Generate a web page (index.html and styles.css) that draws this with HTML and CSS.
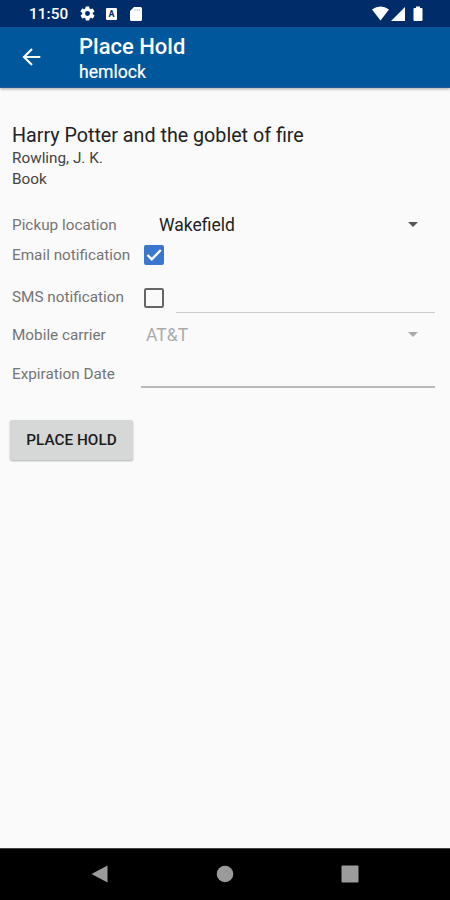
FILE: index.html
```html
<!DOCTYPE html>
<html lang="en">
<head>
<meta charset="utf-8">
<title>Place Hold</title>
<link rel="stylesheet" href="styles.css">
</head>
<body>
<div class="screen">
  <div class="status">
    <span class="clock">11:50</span>
    <svg class="gear" width="17" height="17" viewBox="0 0 24 24"><path fill="#fff" fill-rule="evenodd" d="M19.4 13c.1-.3.1-.6.1-1s0-.7-.1-1l2.1-1.600c.2-.2.3-.5.1-.7l-2-3.400c-.1-.2-.4-.3-.6-.2l-2.500 1c-.5-.4-1.100-.7-1.700-1l-.4-2.600c0-.3-.2-.5-.5-.5h-4c-.2 0-.4.2-.5.4l-.4 2.700c-.6.2-1.100.6-1.700 1l-2.500-1c-.2-.1-.5 0-.6.2l-2 3.400c-.1.2 0 .5.1.7L4.600 11c0 .3-.1.700-.1 1s0 .7.1 1l-2.100 1.600c-.2.2-.3.5-.1.7l2 3.400c.1.200.4.300.6.200l2.500-1c.5.400 1.100.700 1.700 1l.4 2.700c0 .2.200.4.500.4h4c.2 0 .4-.2.500-.4l.4-2.700c.6-.2 1.100-.6 1.700-1l2.500 1c.2.100.5 0 .6-.2l2-3.400c.1-.2 0-.5-.1-.7zM12 15.500a3.500 3.500 0 1 1 0-7 3.500 3.500 0 0 1 0 7z"/></svg>
    <span class="badge">A</span>
    <svg class="sd" width="12" height="14" viewBox="0 0 12 14"><path fill="#fff" d="M4 0h6.500Q12 0 12 1.500v11q0 1.500-1.500 1.500h-9Q0 14 0 12.500V4z"/><path stroke="#a9b7d2" stroke-width=".8" d="M5 2v2M7.200 2v2M9.400 2v2"/></svg>
    <svg class="signals" width="52" height="16" viewBox="0 0 52 16"><path fill="#fff" d="M0 3.500Q8.500-2.500 17 3.500L8.500 14.500zM33 1v14H19zM42.500 2H44V.5h4V2h1.500Q50.500 2 50.500 3v11q0 1-1 1h-7q-1 0-1-1V3q0-1 1-1z"/></svg>
  </div>
  <header class="appbar">
    <svg class="back" width="20" height="20" viewBox="0 0 20 20"><path fill="none" stroke="#fff" stroke-width="2.100" d="M19.300 10H2.800M11 2l-8 8 8 8"/></svg>
    <div>
      <div class="title">Place Hold</div>
      <div class="subtitle">hemlock</div>
    </div>
  </header>
  <main class="content">
    <div class="book">Harry Potter and the goblet of fire</div>
    <div class="meta author">Rowling, J. K.</div>
    <div class="meta format">Book</div>
    <div class="row pickup">
      <span class="label">Pickup location</span>
      <span class="value">Wakefield</span>
      <svg class="caret" width="10" height="5" viewBox="0 0 10 5"><path fill="#555" d="M0 0h10L5 5z"/></svg>
    </div>
    <div class="row email">
      <span class="label">Email notification</span>
      <svg class="box" width="20" height="20" viewBox="0 0 20 20"><rect width="20" height="20" rx="2" fill="#3b78cd"/><path fill="none" stroke="#fff" stroke-width="2.400" d="m3.500 10 4.300 4.300L16.800 5"/></svg>
    </div>
    <div class="row sms">
      <span class="label">SMS notification</span>
      <svg class="box" width="20" height="20" viewBox="0 0 20 20"><rect x="1" y="1" width="18" height="18" rx="1.300" fill="none" stroke="#666" stroke-width="2"/></svg>
      <span class="field phone"></span>
    </div>
    <div class="row carrier">
      <span class="label">Mobile carrier</span>
      <span class="value">AT&amp;T</span>
      <svg class="caret" width="10" height="5" viewBox="0 0 10 5"><path fill="#aaa" d="M0 0h10L5 5z"/></svg>
    </div>
    <div class="row expiry">
      <span class="label">Expiration Date</span>
      <span class="field date"></span>
    </div>
    <button class="submit"><span>PLACE HOLD</span></button>
  </main>
  <nav class="navbar">
    <svg width="18" height="18" viewBox="0 0 18 18"><path fill="#9b9b9b" d="M16.500.5v17L.5 9z"/></svg>
    <svg width="18" height="18" viewBox="0 0 18 18"><circle cx="9" cy="9" r="8.300" fill="#9b9b9b"/></svg>
    <svg width="18" height="18" viewBox="0 0 18 18"><rect x=".5" y=".5" width="17" height="17" rx="1" fill="#9b9b9b"/></svg>
  </nav>
</div>
</body>
</html>
```
FILE: styles.css
```css
* { box-sizing: border-box; }
body { margin: 0; font-family: Roboto, sans-serif; background: #fafafa; }
svg { display: block; flex: none; }
.screen { width: 450px; height: 900px; display: flex; flex-direction: column; }
.status { height: 27px; background: #002d6a; display: flex; align-items: center; padding: 0 26px 0 29px; color: #fff; }
.clock { width: 50px; padding-top: 1px; font-size: 15.300px; font-weight: 500; letter-spacing: .1px; white-space: nowrap; }
.gear { margin-left: 0; }
.badge { width: 11px; height: 12px; margin-left: 10px; border-radius: 1px; background: #fff; color: #002d6a; font-size: 9px; line-height: 12px; font-weight: 700; text-align: center; }
.sd { margin-left: 13px; }
.signals { margin-left: auto; }
.appbar { height: 61px; background: #00579c; border-bottom: 1px solid #285791; box-shadow: 0 1px 3px rgba(0,0,0,.35); display: flex; align-items: center; padding-left: 21px; color: #fff; position: relative; }
.back { margin-right: 38px; }
.title { padding-top: 3px; font-size: 22px; line-height: 27px; font-weight: 500; white-space: nowrap; }
.subtitle { font-size: 17.600px; line-height: 25px; -webkit-text-stroke: .2px #fff; }
.content { flex: 1; padding: 35px 15px 0 12px; }
.book { height: 25px; line-height: 26px; font-size: 19.700px; color: #222; white-space: nowrap; }
.meta { height: 21px; line-height: 21px; font-size: 15.300px; color: #444; }
.row { display: flex; align-items: center; height: 30px; }
.label { width: 132px; flex: none; font-size: 15.300px; color: #757575; white-space: nowrap; }
.value { font-size: 17.500px; color: #222; }
.pickup { margin-top: 20px; }
.pickup .value { margin-left: 15px; }
.caret { margin-left: auto; margin-right: 17px; margin-bottom: 1px; }
.email .box { margin-bottom: 1px; }
.sms { margin-top: 12px; height: 31px; }
.sms .label { margin-bottom: 1px; }
.field { align-self: stretch; flex: 1; }
.phone { margin-left: 12px; border-bottom: 1px solid #c9c9c9; }
.carrier { margin-top: 7px; }
.carrier .value { margin-left: 2px; color: #aaa; }
.expiry { margin-top: 10px; height: 28px; }
.date { margin-left: -3px; border-bottom: 2px solid #b9b9b9; }
.submit { display: block; width: 123px; height: 40px; margin: 32px 0 0 -2px; padding: 0; border: 0; border-radius: 2px; background: #d6d7d7; box-shadow: 0 1px 2px rgba(0,0,0,.3); font: 500 15.300px/40px Roboto, sans-serif; color: #1c1c1c; white-space: nowrap; }
.navbar { height: 52px; background: #000; border-top: 1px solid #444; display: flex; justify-content: space-between; align-items: center; padding: 0 91px 2px; }
```
